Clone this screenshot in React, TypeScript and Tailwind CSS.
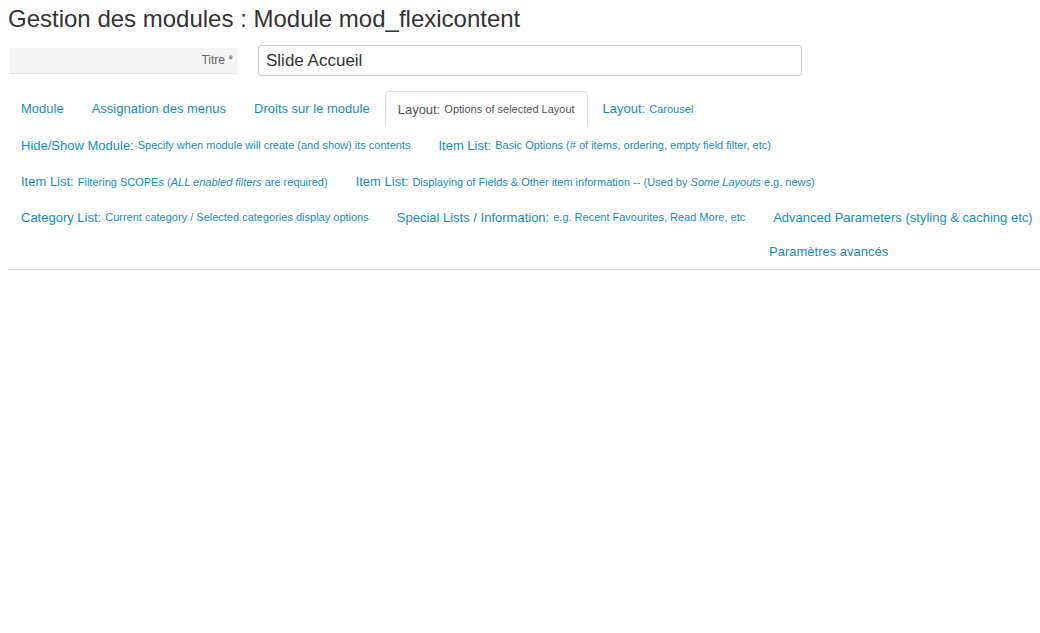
import React from "react";

const link = "text-[#1a8bbf]";

function Tab({ big, small, active }: { big: string; small?: React.ReactNode; active?: boolean }) {
  return (
    <div
      className={
        "px-3 h-full flex items-center whitespace-nowrap mr-[2px] " +
        (active
          ? "border border-[#dddddd] border-b-0 rounded-t-[4px] bg-white text-[#555555]"
          : "border border-transparent " + link)
      }
    >
      <span className="text-[13px]">{big}</span>
      {small ? <span className="text-[11px] ml-[4px]">{small}</span> : null}
    </div>
  );
}

export default function App() {
  return (
    <div className="w-[1040px] h-[633px] bg-white overflow-hidden" style={{ fontFamily: '"Liberation Sans", Arial, sans-serif' }}>
      <div className="pl-[8px] pt-[4px]">
        <h1 className="text-[24px] leading-[30px] text-[#333333]">Gestion des modules : Module mod_flexicontent</h1>
      </div>
      <div className="flex items-center mt-[11px] pl-[9px] h-[31px]">
        <div className="w-[228px] h-[26px] bg-[#f5f5f5] border-b border-[#e6e6e6] flex items-center justify-end pr-[4px] text-[12px] text-[#666666]">
          Titre *
        </div>
        <div className="ml-[21px] w-[544px] h-[31px] border border-[#cccccc] rounded-[3px] flex items-center pl-[7px] text-[17px] text-[#333333]">
          Slide Accueil
        </div>
      </div>
      <div className="mt-[15px] ml-[8px] border-b border-[#dddddd]">
        <div className="flex h-[36px]">
          <Tab big="Module" />
          <Tab big="Assignation des menus" />
          <Tab big="Droits sur le module" />
          <Tab big="Layout:" small="Options of selected Layout" active />
          <Tab big="Layout:" small="Carousel" />
        </div>
        <div className="flex h-[37px]">
          <Tab big="Hide/Show Module:" small="Specify when module will create (and show) its contents" />
          <Tab big="Item List:" small="Basic Options (# of items, ordering, empty field filter, etc)" />
        </div>
        <div className="flex h-[36px]">
          <Tab
            big="Item List:"
            small={
              <>
                Filtering SCOPEs (<i>ALL enabled filters</i> are required)
              </>
            }
          />
          <Tab
            big="Item List:"
            small={
              <>
                Displaying of Fields &amp; Other item information -- (Used by <i>Some Layouts</i> e.g. news)
              </>
            }
          />
        </div>
        <div className="flex h-[35px]">
          <Tab big="Category List:" small="Current category / Selected categories display options" />
          <Tab big="Special Lists / Information:" small="e.g. Recent Favourites, Read More, etc" />
          <Tab big="Advanced Parameters (styling & caching etc)" />
        </div>
        <div className="flex h-[34px] pl-[748px]">
          <Tab big="Paramètres avancés" />
        </div>
      </div>
    </div>
  );
}
